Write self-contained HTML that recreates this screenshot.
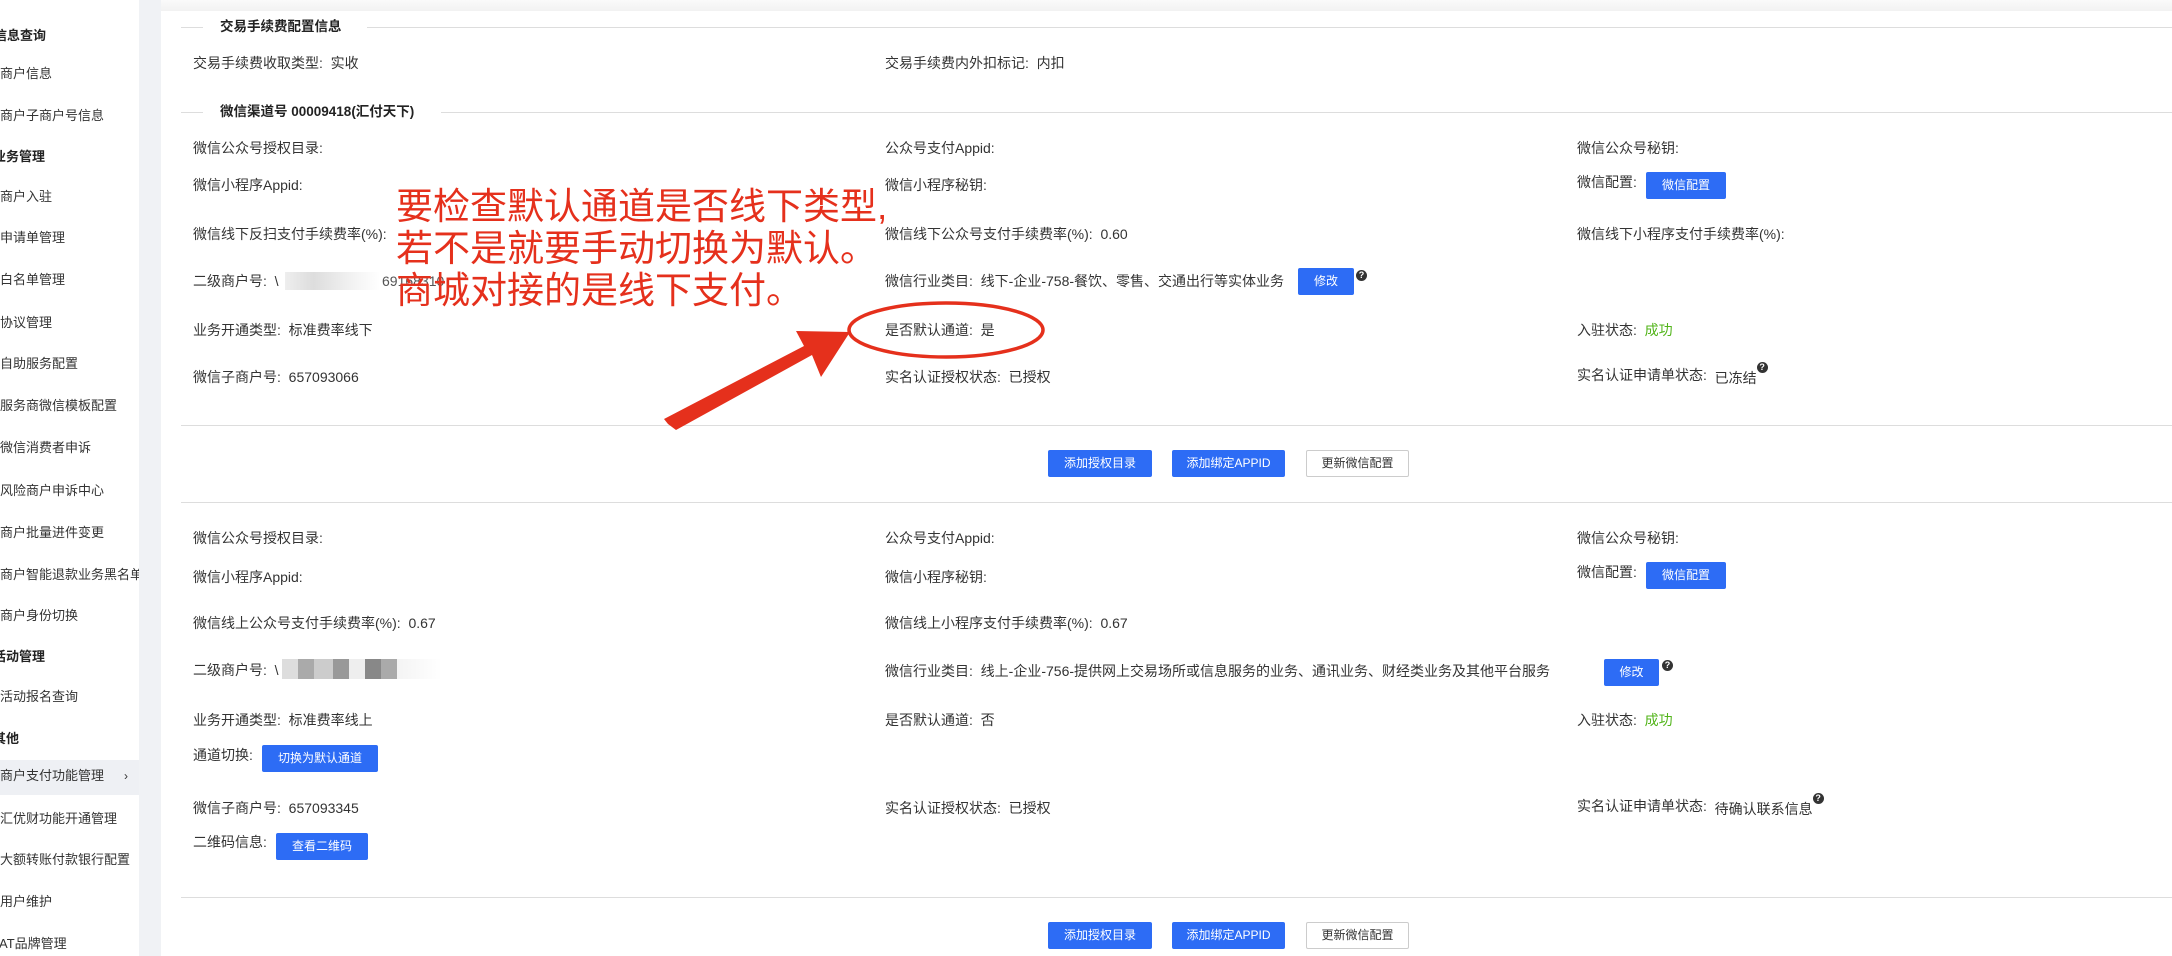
<!DOCTYPE html>
<html><head><meta charset="utf-8"><style>
*{margin:0;padding:0;box-sizing:border-box}
body{width:2172px;height:956px;overflow:hidden;background:#fff;font-family:"Liberation Sans","Noto Sans CJK SC",sans-serif;font-size:14px;color:#333;position:relative}
.a{position:absolute;white-space:nowrap;line-height:18px}
.sb{position:absolute;left:0;top:0;width:139px;height:956px;background:#fff;overflow:hidden;font-size:13px}
.gap{position:absolute;left:139px;top:0;width:22px;height:956px;background:#f0f2f5}
.topbar{position:absolute;left:0;top:0;width:2172px;height:11px;background:linear-gradient(#fafafa,#f2f2f2)}
.h{font-weight:bold;color:#222}
.hl{position:absolute;height:1px;background:#ddd}
.btn{position:absolute;background:#2d6cf5;color:#fff;font-size:12px;text-align:center;border-radius:2px;line-height:27px;height:27px}
.ob{position:absolute;background:#fff;color:#333;font-size:12px;text-align:center;border:1px solid #ccc;border-radius:2px;line-height:25px;height:27px}
.q{position:absolute;width:11px;height:11px;border-radius:50%;background:#333;color:#fff;font-size:9px;line-height:11px;text-align:center;font-weight:bold}
.qi{display:inline-block;vertical-align:top;margin-top:-4px;width:11px;height:11px;border-radius:50%;background:#333;color:#fff;font-size:9px;line-height:11px;text-align:center;font-weight:bold}
.g{color:#52b41a}
.red{position:absolute;color:#e5301c;font-size:37px;line-height:42px;white-space:nowrap;left:396px}
</style></head><body>
<div class="topbar"></div>
<div class="sb">
<div class="a h" style="left:-6px;top:27px">信息查询</div>
<div class="a" style="left:0;top:65px">商户信息</div>
<div class="a" style="left:0;top:107px">商户子商户号信息</div>
<div class="a h" style="left:-7px;top:148px">业务管理</div>
<div class="a" style="left:0;top:188px">商户入驻</div>
<div class="a" style="left:0;top:229px">申请单管理</div>
<div class="a" style="left:0;top:271px">白名单管理</div>
<div class="a" style="left:0;top:314px">协议管理</div>
<div class="a" style="left:0;top:355px">自助服务配置</div>
<div class="a" style="left:0;top:397px">服务商微信模板配置</div>
<div class="a" style="left:0;top:439px">微信消费者申诉</div>
<div class="a" style="left:0;top:482px">风险商户申诉中心</div>
<div class="a" style="left:0;top:524px">商户批量进件变更</div>
<div class="a" style="left:0;top:566px">商户智能退款业务黑名单</div>
<div class="a" style="left:0;top:607px">商户身份切换</div>
<div class="a h" style="left:-7px;top:648px">活动管理</div>
<div class="a" style="left:0;top:688px">活动报名查询</div>
<div class="a h" style="left:-7px;top:730px">其他</div>
<div style="position:absolute;left:0;top:760px;width:139px;height:35px;background:#eef0f4"></div>
<div class="a" style="left:0;top:767px">商户支付功能管理</div>
<div class="a" style="left:124px;top:767px;font-size:12px">›</div>
<div class="a" style="left:0;top:810px">汇优财功能开通管理</div>
<div class="a" style="left:0;top:851px">大额转账付款银行配置</div>
<div class="a" style="left:0;top:893px">用户维护</div>
<div class="a" style="left:-1px;top:935px">AT品牌管理</div>
</div>
<div class="gap"></div>

<div class="hl" style="left:181px;top:27px;width:22px"></div>
<div class="a h" style="left:220px;top:18px;font-size:13.5px">交易手续费配置信息</div>
<div class="hl" style="left:367px;top:27px;width:1805px"></div>
<div class="a" style="left:193px;top:54px">交易手续费收取类型:&nbsp; 实收</div>
<div class="a" style="left:885px;top:54px">交易手续费内外扣标记:&nbsp; 内扣</div>

<div class="hl" style="left:181px;top:112px;width:22px"></div>
<div class="a h" style="left:220px;top:103px;font-size:13.5px">微信渠道号 00009418(汇付天下)</div>
<div class="hl" style="left:441px;top:112px;width:1731px"></div>

<div class="a" style="left:193px;top:139px">微信公众号授权目录:</div>
<div class="a" style="left:885px;top:139px">公众号支付Appid:</div>
<div class="a" style="left:1577px;top:139px">微信公众号秘钥:</div>
<div class="a" style="left:193px;top:176px">微信小程序Appid:</div>
<div class="a" style="left:885px;top:176px">微信小程序秘钥:</div>
<div class="a" style="left:1577px;top:173px">微信配置:</div>
<div class="btn" style="left:1646px;top:172px;width:80px">微信配置</div>
<div class="a" style="left:193px;top:225px">微信线下反扫支付手续费率(%):</div>
<div class="a" style="left:885px;top:225px">微信线下公众号支付手续费率(%):&nbsp; 0.60</div>
<div class="a" style="left:1577px;top:225px">微信线下小程序支付手续费率(%):</div>
<div class="a" style="left:193px;top:272px">二级商户号:&nbsp; \</div>
<div style="position:absolute;left:285px;top:272px;width:95px;height:18px;background:linear-gradient(90deg,#eee,#ddd 30%,#f2f2f2 70%,#fff)"></div>
<div class="a" style="left:382px;top:272px;color:#555">69168310</div>
<div class="a" style="left:885px;top:272px">微信行业类目:&nbsp; 线下-企业-758-餐饮、零售、交通出行等实体业务</div>
<div class="btn" style="left:1298px;top:268px;width:56px">修改</div>
<div class="q" style="left:1356px;top:270px">?</div>
<div class="a" style="left:193px;top:321px">业务开通类型:&nbsp; 标准费率线下</div>
<div class="a" style="left:885px;top:321px">是否默认通道:&nbsp; 是</div>
<div class="a" style="left:1577px;top:321px">入驻状态:&nbsp; <span class="g">成功</span></div>
<div class="a" style="left:193px;top:368px">微信子商户号:&nbsp; 657093066</div>
<div class="a" style="left:885px;top:368px">实名认证授权状态:&nbsp; 已授权</div>
<div class="a" style="left:1577px;top:366px">实名认证申请单状态:&nbsp; <span style="position:relative;top:3px">已冻结</span><span class="qi">?</span></div>
<div class="hl" style="left:181px;top:425px;width:1991px"></div>
<div class="btn" style="left:1048px;top:450px;width:104px">添加授权目录</div>
<div class="btn" style="left:1172px;top:450px;width:113px">添加绑定APPID</div>
<div class="ob" style="left:1306px;top:450px;width:103px">更新微信配置</div>
<div class="hl" style="left:181px;top:502px;width:1991px"></div>

<div class="a" style="left:193px;top:529px">微信公众号授权目录:</div>
<div class="a" style="left:885px;top:529px">公众号支付Appid:</div>
<div class="a" style="left:1577px;top:529px">微信公众号秘钥:</div>
<div class="a" style="left:193px;top:568px">微信小程序Appid:</div>
<div class="a" style="left:885px;top:568px">微信小程序秘钥:</div>
<div class="a" style="left:1577px;top:563px">微信配置:</div>
<div class="btn" style="left:1646px;top:562px;width:80px">微信配置</div>
<div class="a" style="left:193px;top:614px">微信线上公众号支付手续费率(%):&nbsp; 0.67</div>
<div class="a" style="left:885px;top:614px">微信线上小程序支付手续费率(%):&nbsp; 0.67</div>
<div class="a" style="left:193px;top:661px">二级商户号:&nbsp; \</div>
<div style="position:absolute;left:282px;top:659px;width:160px;height:20px;background:linear-gradient(90deg,#ddd 0,#ddd 10%,#aaa 10%,#aaa 20%,#ccc 20%,#ccc 32%,#999 32%,#999 42%,#eee 42%,#eee 52%,#888 52%,#888 62%,#aaa 62%,#aaa 72%,#f4f4f4 72%,#fff)"></div>
<div class="a" style="left:885px;top:662px">微信行业类目:&nbsp; 线上-企业-756-提供网上交易场所或信息服务的业务、通讯业务、财经类业务及其他平台服务</div>
<div class="btn" style="left:1604px;top:659px;width:55px">修改</div>
<div class="q" style="left:1662px;top:660px">?</div>
<div class="a" style="left:193px;top:711px">业务开通类型:&nbsp; 标准费率线上</div>
<div class="a" style="left:885px;top:711px">是否默认通道:&nbsp; 否</div>
<div class="a" style="left:1577px;top:711px">入驻状态:&nbsp; <span class="g">成功</span></div>
<div class="a" style="left:193px;top:746px">通道切换:</div>
<div class="btn" style="left:262px;top:745px;width:116px">切换为默认通道</div>
<div class="a" style="left:193px;top:799px">微信子商户号:&nbsp; 657093345</div>
<div class="a" style="left:885px;top:799px">实名认证授权状态:&nbsp; 已授权</div>
<div class="a" style="left:1577px;top:797px">实名认证申请单状态:&nbsp; <span style="position:relative;top:3px">待确认联系信息</span><span class="qi">?</span></div>
<div class="a" style="left:193px;top:833px">二维码信息:</div>
<div class="btn" style="left:276px;top:833px;width:92px">查看二维码</div>
<div class="hl" style="left:181px;top:897px;width:1991px"></div>
<div class="btn" style="left:1048px;top:922px;width:104px">添加授权目录</div>
<div class="btn" style="left:1172px;top:922px;width:113px">添加绑定APPID</div>
<div class="ob" style="left:1306px;top:922px;width:103px">更新微信配置</div>

<div class="red" style="top:186px">要检查默认通道是否线下类型,</div>
<div class="red" style="top:228px">若不是就要手动切换为默认。</div>
<div class="red" style="top:270px">商城对接的是线下支付。</div>
<svg style="position:absolute;left:0;top:0" width="2172" height="956">
<ellipse cx="946" cy="330" rx="97" ry="27" fill="none" stroke="#e5301c" stroke-width="3.5"/>
<polygon points="668,424 676,430 812,355 821,377 850,332 796,331 804,346 664,419" fill="#e5301c"/>
</svg>
</body></html>
